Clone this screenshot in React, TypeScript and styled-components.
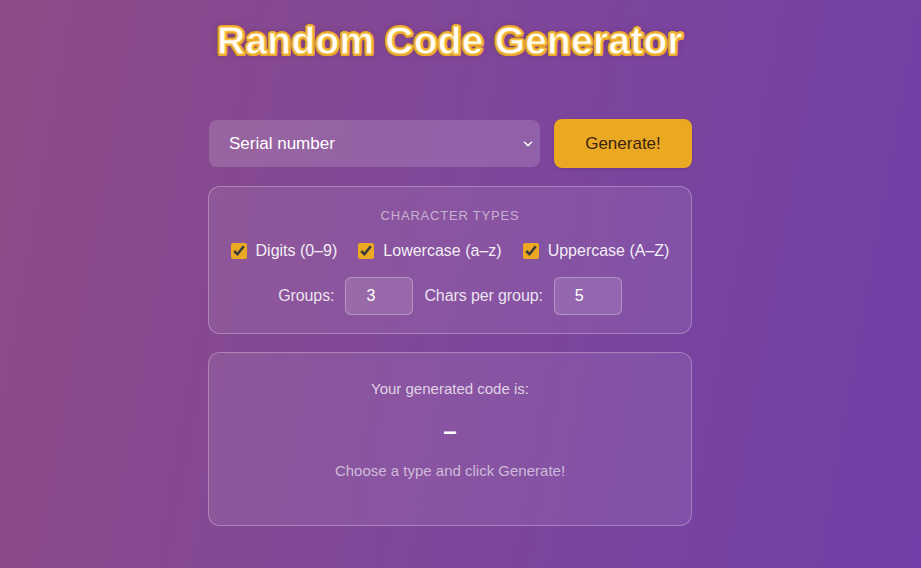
import styled, { createGlobalStyle } from 'styled-components';
import { ChevronDown } from 'lucide-react';

const GlobalStyle = createGlobalStyle`
  html, body {
    margin: 0;
    padding: 0;
    height: 100%;
  }
  body {
    font-family: 'Liberation Sans', Arial, sans-serif;
    background: linear-gradient(100deg, #8d4b87 0%, #7f469a 50%, #703fa7 100%);
    color: #fff;
    min-height: 100vh;
  }
`;

const Page = styled.div`
  min-height: 100vh;
  display: flex;
  flex-direction: column;
  align-items: center;
  padding: 0 21px 0 0;
  box-sizing: border-box;
`;

const Title = styled.h1`
  margin: 19px 0 0;
  font-family: 'Liberation Sans', Arial, sans-serif;
  font-weight: 900;
  font-size: 39px;
  letter-spacing: 0.2px;
  color: #fffdf6;
  -webkit-text-stroke: 1px #f5c040;
  text-shadow:
    2px 0 0 #e8a72a,
    -2px 0 0 #e8a72a,
    0 2px 0 #e8a72a,
    0 -2px 0 #e8a72a,
    1.5px 1.5px 0 #e8a72a,
    -1.5px 1.5px 0 #e8a72a,
    1.5px -1.5px 0 #e8a72a,
    -1.5px -1.5px 0 #e8a72a,
    0 0 6px rgba(120, 40, 20, 0.5);
`;

const Main = styled.div`
  width: 484px;
  margin-top: 56px;
  display: flex;
  flex-direction: column;
  gap: 18px;
`;

const Controls = styled.div`
  display: flex;
  gap: 14px;
  align-items: center;
  padding: 0 0 0 1px;
`;

const SelectWrap = styled.div`
  position: relative;
  flex: 1;
  display: flex;
`;

const Select = styled.select`
  appearance: none;
  -webkit-appearance: none;
  flex: 1;
  height: 47px;
  border: none;
  border-radius: 8px;
  background: rgba(255, 255, 255, 0.15);
  color: #fff;
  font-family: 'Liberation Sans', Arial, sans-serif;
  font-size: 17px;
  padding: 0 20px;
  outline: none;

  option {
    color: #222;
  }
`;

const Chevron = styled(ChevronDown)`
  position: absolute;
  right: 5px;
  top: 50%;
  transform: translateY(-50%);
  pointer-events: none;
  color: #fff;
`;

const Button = styled.button`
  width: 138px;
  height: 49px;
  border: none;
  border-radius: 8px;
  background: #eaa823;
  color: #3b2410;
  font-family: 'Liberation Sans', Arial, sans-serif;
  font-size: 17px;
  cursor: pointer;
  box-shadow: 0 1px 3px rgba(0, 0, 0, 0.15);
`;

const Card = styled.div<{ $pad: string }>`
  border: 1px solid rgba(255, 255, 255, 0.28);
  border-radius: 12px;
  background: rgba(255, 255, 255, 0.08);
  padding: ${({ $pad }) => $pad};
  display: flex;
  flex-direction: column;
  align-items: center;
`;

const SectionTitle = styled.div`
  font-size: 13px;
  letter-spacing: 0.8px;
  color: rgba(255, 255, 255, 0.55);
  text-transform: uppercase;
`;

const CheckRow = styled.div`
  display: flex;
  gap: 21px;
  margin-top: 19px;
  white-space: nowrap;
`;

const CheckLabel = styled.label`
  display: flex;
  align-items: center;
  gap: 9px;
  font-size: 16px;
  color: rgba(255, 255, 255, 0.92);
`;

const Check = styled.input`
  width: 16px;
  height: 16px;
  margin: 0;
  flex-shrink: 0;
  accent-color: #eaa823;
`;

const FieldRow = styled.div`
  display: flex;
  align-items: center;
  margin-top: 17px;
  gap: 11px;
  white-space: nowrap;
`;

const FieldLabel = styled.span`
  font-size: 16px;
  letter-spacing: -0.1px;
  color: rgba(255, 255, 255, 0.85);
`;

const NumberInput = styled.input`
  box-sizing: border-box;
  width: 68px;
  height: 38px;
  border: 1px solid rgba(255, 255, 255, 0.3);
  border-radius: 6px;
  background: rgba(255, 255, 255, 0.12);
  color: #fff;
  font-family: 'Liberation Sans', Arial, sans-serif;
  font-size: 16px;
  padding: 0 0 0 20px;
  outline: none;
  -moz-appearance: textfield;

  &::-webkit-inner-spin-button,
  &::-webkit-outer-spin-button {
    -webkit-appearance: none;
    margin: 0;
  }
`;

const Caption = styled.div`
  font-size: 15px;
  color: rgba(255, 255, 255, 0.75);
`;

const Code = styled.div`
  margin-top: 20px;
  font-size: 24px;
  font-weight: bold;
  color: #fff;
  line-height: 28px;
`;

const Hint = styled.div`
  margin-top: 17px;
  font-size: 15px;
  color: rgba(255, 255, 255, 0.6);
`;

const types = [
  { id: 'digits', label: 'Digits (0–9)' },
  { id: 'lower', label: 'Lowercase (a–z)' },
  { id: 'upper', label: 'Uppercase (A–Z)' },
];

export default function App() {
  return (
    <>
      <GlobalStyle />
      <Page>
        <Title>Random Code Generator</Title>
        <Main>
          <Controls>
            <SelectWrap>
              <Select defaultValue="serial">
                <option value="serial">Serial number</option>
                <option value="coupon">Coupon code</option>
                <option value="pin">PIN</option>
              </Select>
              <Chevron size={14} strokeWidth={2.5} />
            </SelectWrap>
            <Button>Generate!</Button>
          </Controls>

          <Card $pad="21px 20px 18px">
            <SectionTitle>Character types</SectionTitle>
            <CheckRow>
              {types.map((t) => (
                <CheckLabel key={t.id}>
                  <Check type="checkbox" defaultChecked />
                  {t.label}
                </CheckLabel>
              ))}
            </CheckRow>
            <FieldRow>
              <FieldLabel>Groups:</FieldLabel>
              <NumberInput type="number" defaultValue={3} />
              <FieldLabel>Chars per group:</FieldLabel>
              <NumberInput type="number" defaultValue={5} />
            </FieldRow>
          </Card>

          <Card $pad="27px 20px 46px">
            <Caption>Your generated code is:</Caption>
            <Code>–</Code>
            <Hint>Choose a type and click Generate!</Hint>
          </Card>
        </Main>
      </Page>
    </>
  );
}
